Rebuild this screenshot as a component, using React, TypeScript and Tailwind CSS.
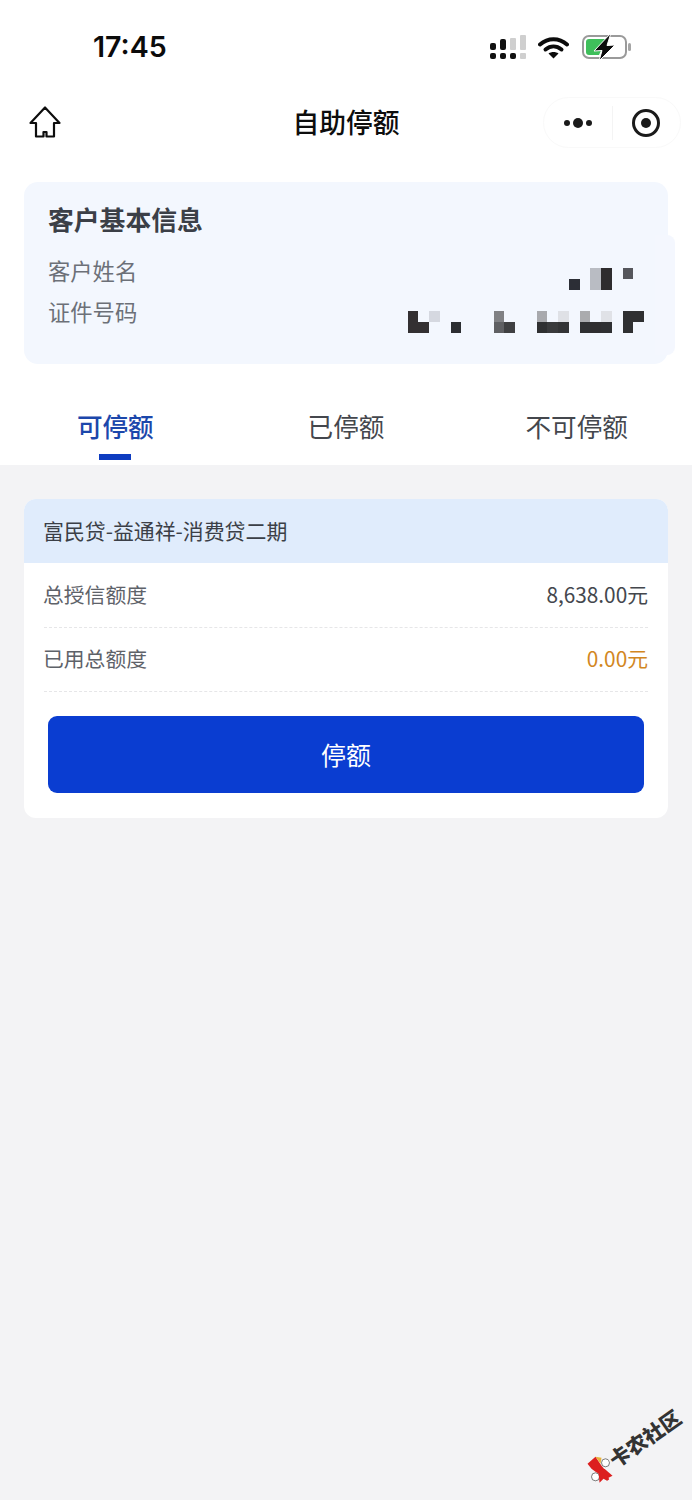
import React from 'react';

const cjk = "font-['Noto_Sans_CJK_SC','Noto_Sans',sans-serif]";

// blurred customer details, one entry per mosaic cell: [column, row, colour]
const mosaic: [number, number, string][] = [
  [15, 2, 'bg-[#2c2e36]'],
  [17, 1, 'bg-[#b9bcc3]'],
  [17, 2, 'bg-[#b9bcc3]'],
  [18, 1, 'bg-[#2e2c2e]'],
  [18, 2, 'bg-[#2e2c2e]'],
  [20, 1, 'bg-[#55565c]'],
  [0, 4, 'bg-[#333032]'],
  [0, 5, 'bg-[#333032]'],
  [1, 5, 'bg-[#333032]'],
  [2, 4, 'bg-[#d5d8e0]'],
  [4, 5, 'bg-[#2c2e32]'],
  [8, 4, 'bg-[#808184]'],
  [8, 5, 'bg-[#5f6063]'],
  [9, 5, 'bg-[#3f4042]'],
  [12, 4, 'bg-[#a8a9ad]'],
  [12, 5, 'bg-[#2f3032]'],
  [13, 5, 'bg-[#393a3c]'],
  [14, 4, 'bg-[#dfe1e6]'],
  [14, 5, 'bg-[#333436]'],
  [16, 4, 'bg-[#aaabae]'],
  [16, 5, 'bg-[#2f3032]'],
  [17, 5, 'bg-[#2f2e30]'],
  [18, 4, 'bg-[#e0e2e7]'],
  [18, 5, 'bg-[#2f3032]'],
  [20, 4, 'bg-[#2f3032]'],
  [20, 5, 'bg-[#2f3032]'],
  [21, 4, 'bg-[#2f3032]'],
];

const StatusBar = () => (
  <div className="flex h-[90px] items-start justify-between pl-[93px] pr-[60px] pt-[30px]">
    <span className="font-['Inter',sans-serif] text-[28.6px] font-semibold leading-[34px] text-[#0b0b0b]">17:45</span>
    <div className="flex items-center gap-[10px] pt-[3px]">
      <svg width="36" height="25" viewBox="0 0 36 25">
        <rect x="0" y="8" width="6" height="7" rx="2" fill="#111" />
        <rect x="10" y="4" width="6" height="11" rx="2" fill="#111" />
        <rect x="20" y="3" width="6" height="12" rx="1" fill="#cfcfcf" />
        <rect x="30" y="0" width="6" height="15" rx="1" fill="#cfcfcf" />
        <rect x="0" y="18" width="6" height="6" rx="2" fill="#111" />
        <rect x="10" y="18" width="6" height="6" rx="2" fill="#111" />
        <rect x="20" y="18" width="6" height="6" rx="2" fill="#111" />
        <rect x="30" y="18" width="6" height="6" rx="1" fill="#cfcfcf" />
      </svg>
      <svg width="31" height="23" viewBox="0 0 31 23" fill="none" className="ml-[2px]">
        <path d="M2 8.5C10 1.5 21 1.5 29 8.5" stroke="#0b0b0b" strokeWidth="4" strokeLinecap="round" />
        <path d="M7.5 13.5C12.5 9.5 18.5 9.5 23.5 13.5" stroke="#0b0b0b" strokeWidth="4" strokeLinecap="round" />
        <path d="M15.5 22.5L10.5 17.5C13.5 15.5 17.5 15.5 20.5 17.5Z" fill="#0b0b0b" />
      </svg>
      <svg width="50" height="28" viewBox="0 0 50 28" fill="none" className="ml-[3px]">
        <rect x="1" y="3" width="43" height="22" rx="6" stroke="#9a9a9a" strokeWidth="2" />
        <path d="M4 9a3 3 0 0 1 3-3h17l-7 16H7a3 3 0 0 1-3-3Z" fill="#3fbf5b" />
        <rect x="46" y="10" width="3" height="8" rx="1.5" fill="#a5a5a5" />
        <path d="M29 0L12 18L20 17.5L17 28L33 12L25 12.5Z" fill="#0b0b0b" stroke="#fff" strokeWidth="1" />
      </svg>
    </div>
  </div>
);

const NavBar = () => (
  <div className="relative flex h-[66px] items-center justify-center pb-[1px]">
    <svg width="34" height="34" viewBox="0 0 34 34" fill="none" className="absolute left-[28px] top-[15px]">
      <path
        d="M17 2.5L2.5 18H8V31.5H15.5V27H18.5V31.5H26V18H31.5Z"
        stroke="#0d0d0d"
        strokeWidth="2.2"
        strokeLinejoin="round"
      />
    </svg>
    <span className={`${cjk} text-[26.8px] font-medium text-[#0d0d0d]`}>自助停额</span>
    <div className="absolute left-[543px] top-[7px] flex h-[51px] w-[138px] items-center rounded-full border border-[#f9f9f9]">
      <div className="flex flex-1 items-center justify-center gap-[3px]">
        <span className="h-[6px] w-[6px] rounded-full bg-[#1a1a1a]" />
        <span className="h-[10px] w-[10px] rounded-full bg-[#1a1a1a]" />
        <span className="h-[6px] w-[6px] rounded-full bg-[#1a1a1a]" />
      </div>
      <div className="h-[34px] w-px bg-[#f4f4f4]" />
      <div className="flex flex-1 items-center justify-center">
        <div className="flex h-[28px] w-[28px] items-center justify-center rounded-full border-[3px] border-[#1a1a1a]">
          <span className="h-[10px] w-[10px] rounded-full bg-[#1a1a1a]" />
        </div>
      </div>
    </div>
  </div>
);

const CustomerInfo = () => (
  <div className="relative mx-[24px] mt-[26px] h-[182px] rounded-[14px] bg-[#f3f7fe] px-[24px] pt-[19px]">
    {/* the screenshot has a slightly wider strip on the right edge of the card */}
    <div className="absolute bottom-[9px] right-[-7px] top-[53px] w-[20px] rounded-r-[8px] bg-[#f4f7fe]" />
    <div className={`${cjk} text-[25.8px] font-semibold leading-[36px] text-[#3b3f47]`}>客户基本信息</div>
    <div className="mt-[13px] flex justify-between">
      <div className={`${cjk} text-[22.3px] leading-[41px] text-[#6c7078]`}>
        <div>客户姓名</div>
        <div>证件号码</div>
      </div>
      <div className="relative mt-[18px] grid grid-cols-[repeat(22,10.75px)] grid-rows-[11px_11px_21px_11px_11px] self-start">
        {mosaic.map(([col, row, color]) => (
          <div
            key={`${col}-${row}`}
            className={color}
            style={{ gridColumnStart: col + 1, gridRowStart: row }}
          />
        ))}
      </div>
    </div>
  </div>
);

const Tabs = () => (
  <div className="grid h-[101px] grid-cols-3">
    {['可停额', '已停额', '不可停额'].map((tab, i) => (
      <div key={tab} className="relative flex justify-center pt-[44px]">
        <span
          className={`${cjk} text-[25.6px] leading-[36px] ${i === 0 ? 'font-medium text-[#1c47ab]' : 'text-[#44474d]'}`}
        >
          {tab}
        </span>
        {i === 0 && <div className="absolute bottom-[5px] h-[6px] w-[32px] bg-[#0e3cc0]" />}
      </div>
    ))}
  </div>
);

const QuotaRow = ({
  label,
  value,
  valueClass,
  heightClass,
}: {
  label: string;
  value: string;
  valueClass: string;
  heightClass: string;
}) => (
  <div className={`flex items-center justify-between border-b border-dashed border-[#e6e6e8] ${heightClass}`}>
    <span className={`${cjk} -ml-[1px] text-[20.8px] text-[#5e6269]`}>{label}</span>
    <span className={`${cjk} text-[20.8px] ${valueClass}`}>{value}</span>
  </div>
);

const QuotaCard = () => (
  <div className="mx-[24px] overflow-hidden rounded-[12px] bg-white">
    <div className={`${cjk} flex h-[64px] items-center bg-[#e0ecfc] pl-[19px] pr-[20px] text-[20.9px] text-[#3b3f47]`}>
      富民贷-益通祥-消费贷二期
    </div>
    <div className="px-[20px]">
      <QuotaRow label="总授信额度" value="8,638.00元" valueClass="text-[#44474d]" heightClass="h-[65px]" />
      <QuotaRow label="已用总额度" value="0.00元" valueClass="text-[#d2871f]" heightClass="h-[64px] pb-[2px]" />
    </div>
    <div className="px-[24px] pb-[25px] pt-[24px]">
      <button className={`${cjk} h-[77px] w-full rounded-[9px] bg-[#0a3dd1] text-[25px] text-white`}>停额</button>
    </div>
  </div>
);

const Watermark = () => (
  <div className="absolute bottom-[40px] right-[4px] flex rotate-[-35deg] items-center gap-[1px]">
    <svg width="28" height="28" viewBox="-14 -14 28 28" className="shrink-0">
      <g transform="rotate(35)">
        <circle cx="7" cy="-7" r="4" fill="#fff" stroke="#444" strokeWidth="0.7" />
        <circle cx="-3" cy="7" r="4" fill="#fff" stroke="#444" strokeWidth="0.7" />
        <path d="M-11 -6L-3 -13L3 -4L8 2L2 5L-3 2L-7 -1Z" fill="#dc1f1f" />
        <path d="M0 2L6 -1L14 6L10 8L12 13L5 9L1 13Z" fill="#dc1f1f" />
        <path d="M-3 -13L3 -12L2 -6Z" fill="#e9b13a" />
      </g>
    </svg>
    <span className={`${cjk} text-[20.5px] font-black leading-none text-[#333]`}>卡农社区</span>
  </div>
);

export default function App() {
  return (
    <div className="relative flex h-[1500px] w-[692px] flex-col overflow-hidden bg-white">
      <StatusBar />
      <NavBar />
      <CustomerInfo />
      <Tabs />
      <div className="flex-1 bg-[#f3f3f5] pt-[34px]">
        <QuotaCard />
      </div>
      <Watermark />
    </div>
  );
}
